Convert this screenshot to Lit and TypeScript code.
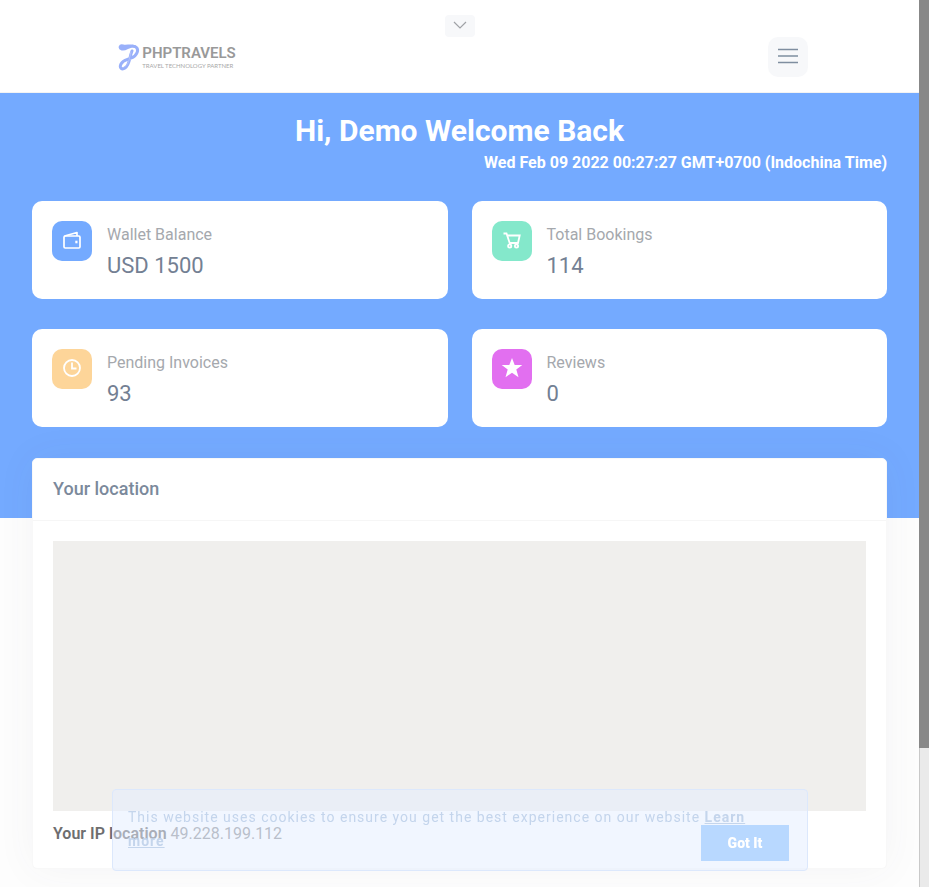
import { LitElement, html, css, svg } from "lit";
import { customElement } from "lit/decorators.js";
import { classMap } from "lit/directives/class-map.js";

const wallet = svg`<g fill="none" stroke="#fff" stroke-width="1.700" stroke-linejoin="round"><rect x="3" y="7" width="16" height="12" rx="1.200"/><path d="M3.500 7L16 3.500V7"/><path d="M14.300 13h2.200" stroke-width="2.600"/></g>`;
const cart = svg`<g fill="none" stroke="#fff" stroke-width="1.800"><path d="M2.500 4.500h3l3.200 9.500h8.300l1.700-7.500H6.500"/><circle cx="8.700" cy="17" r="1.600"/><circle cx="15.500" cy="17" r="1.600"/></g>`;
const clock = svg`<g fill="none" stroke="#fff" stroke-width="1.800"><circle cx="11" cy="11" r="8"/><path d="M11 5.500v6h4.500"/></g>`;
const star = svg`<path fill="#fff" d="M11 1l2.700 7h7.600l-6 4.600 2.200 7.600-6.500-4.500-6.500 4.500 2.200-7.600-6-4.600h7.600z"/>`;

const stats = [
  { label: "Wallet Balance", value: "USD 1500", tone: "blue", icon: wallet },
  { label: "Total Bookings", value: "114", tone: "green", icon: cart },
  { label: "Pending Invoices", value: "93", tone: "amber", icon: clock },
  { label: "Reviews", value: "0", tone: "pink", icon: star },
];

@customElement("app-root")
export class AppRoot extends LitElement {
  static styles = css`
    :host {
      display: flow-root;
      position: relative;
      box-sizing: border-box;
      min-height: 100vh;
      padding-right: 10px;
      background: #fdfdfd;
      font-family: Roboto, sans-serif;
      font-size: 16px;
      line-height: 24px;
      color: #6e6e70;
    }
    * { box-sizing: border-box; }
    button { border: 0; padding: 0; font: inherit; cursor: pointer; }
    svg { display: block; }
    h1, h2, p { margin: 0; }
    header {
      height: 93px;
      background: #fff;
      border-bottom: 1px solid #f3f3f3;
      padding-top: 15px;
      display: flex;
      flex-direction: column;
      align-items: center;
    }
    .expand {
      width: 30px;
      height: 22px;
      padding-bottom: 2px;
      border-radius: 4px;
      background: #f7f8fa;
      display: grid;
      place-items: center;
    }
    .bar {
      width: 76%;
      padding: 0 1px 0 8px;
      display: flex;
      justify-content: space-between;
      align-items: center;
    }
    .logo { display: flex; gap: 2px; text-decoration: none; }
    .logo-text {
      display: flex;
      flex-direction: column;
      white-space: nowrap;
    }
    .brand { font-size: 15px; line-height: 18px; font-weight: 600; color: #999; }
    .tagline { font-family: Lato, sans-serif; font-size: 6px; line-height: 7px; color: #a8a8a8; }
    .menu {
      width: 40px;
      height: 40px;
      padding-bottom: 2px;
      border-radius: 10px;
      background: #f7f8fa;
      display: grid;
      place-items: center;
    }
    .hero {
      background: #74aaff;
      color: #fff;
      padding: 20px 32px 91px;
    }
    h1 { font-size: 30px; line-height: 36px; font-weight: 700; text-align: center; }
    .time { text-align: right; font-weight: 700; line-height: 28px; margin-bottom: 24px; }
    .stats { display: grid; grid-template-columns: 1fr 1fr; gap: 30px 24px; }
    .stat {
      display: flex;
      gap: 15px;
      padding: 20px 20px 16px;
      background: #fff;
      border-radius: 10px;
    }
    .tile {
      width: 40px;
      height: 40px;
      padding-bottom: 2px;
      border-radius: 10px;
      display: grid;
      place-items: center;
      flex: none;
    }
    .blue { background: #74aaff; }
    .green { background: #84e8cb; }
    .amber { background: #fdd599; }
    .pink { background: #e26ff0; }
    .label { color: #a5a8ad; line-height: 28px; }
    .value { color: #738093; font-size: 22px; line-height: 34px; }
    .location {
      position: relative;
      margin: -60px 32px 18px;
      background: #fff;
      border: 1px solid #f8f8f8;
      border-radius: 5px;
      box-shadow: 0 0 40px rgba(82, 85, 90, 0.05);
    }
    h2 {
      padding: 0 20px 2px;
      font-size: 18px;
      line-height: 59px;
      font-weight: 500;
      color: #7b899b;
      border-bottom: 1px solid #f6f6f6;
    }
    .body { padding: 20px 20px 22px; }
    .map { height: 270px; background: #f0efed; margin-bottom: 11px; }
    .ip { color: #8e9094; }
    .ip strong { color: #6e6e70; font-weight: 600; }
    .cookie {
      position: fixed;
      bottom: 16px;
      left: 112px;
      right: 121px;
      height: 82px;
      padding: 15px 48px 15px 15px;
      border: 1px solid #dce8fc;
      border-radius: 4px;
      background: rgba(228, 238, 255, 0.5);
      font-size: 14px;
      letter-spacing: 1px;
      color: #c4d5ec;
    }
    .cookie a { color: #c4d5ec; font-weight: 700; }
    .accept {
      position: absolute;
      right: 18px;
      bottom: 9px;
      width: 88px;
      height: 36px;
      background: #b8d8ff;
      color: #fff;
      font-weight: 900;
      letter-spacing: 0;
    }
    .track {
      position: fixed;
      top: 0;
      right: 0;
      bottom: 0;
      width: 10px;
      background: #eaeaea;
      border-left: 1px solid #c9c9c9;
    }
    .thumb { height: 748px; margin-left: -1px; background: #888; }
  `;

  render() {
    return html`
      <header>
        <button class="expand" aria-label="Expand top bar">
          <svg width="16" height="10" viewBox="0 0 16 10" fill="none" stroke="#a0a2a6" stroke-width="1.200"><path d="M2 2l6 6 6-6"/></svg>
        </button>
        <div class="bar">
          <a class="logo" href="#" aria-label="PHPTRAVELS">
            <svg width="22" height="27" viewBox="0 0 22 27" fill="none" stroke="#99b0fa" stroke-linecap="round">
              <path stroke-width="3" d="M15 2C10 2 8 6 4 5C1 4 2 1 5 2C8 3 13 1 17 2.500C22 5 19 12 13 14C9 16 5 16 3 20C1 24 4 26 7 24C12 21 11 14 14 7"/>
              <path stroke="#b5c4fc" stroke-width="1" d="M13 8C11 15 11 21 6 23"/>
            </svg>
            <span class="logo-text">
              <span class="brand">PHPTRAVELS</span>
              <span class="tagline">TRAVEL TECHNOLOGY PARTNER</span>
            </span>
          </a>
          <button class="menu" aria-label="Menu">
            <svg width="20" height="16" viewBox="0 0 20 16" stroke="#7f8ea0" stroke-width="1.500"><path d="M0 1.500h20M0 8h20M0 14.500h20"/></svg>
          </button>
        </div>
      </header>
      <main>
        <section class="hero">
          <h1>Hi, Demo Welcome Back</h1>
          <p class="time">Wed Feb 09 2022 00:27:27 GMT+0700 (Indochina Time)</p>
          <div class="stats">
            ${stats.map(
              (s) => html`<article class="stat">
                <span class=${classMap({ tile: true, [s.tone]: true })}>
                  <svg width="22" height="22" viewBox="0 0 22 22" aria-hidden="true">${s.icon}</svg>
                </span>
                <div>
                  <p class="label">${s.label}</p>
                  <p class="value">${s.value}</p>
                </div>
              </article>`
            )}
          </div>
        </section>
        <section class="location">
          <h2>Your location</h2>
          <div class="body">
            <div class="map"></div>
            <p class="ip"><strong>Your IP location</strong> 49.228.199.112</p>
          </div>
        </section>
      </main>
      <aside class="cookie" aria-label="Cookie notice">
        This website uses cookies to ensure you get the best experience on our website
        <a href="#">Learn more</a>
        <button class="accept">Got It</button>
      </aside>
      <div class="track" aria-hidden="true"><div class="thumb"></div></div>
    `;
  }
}
